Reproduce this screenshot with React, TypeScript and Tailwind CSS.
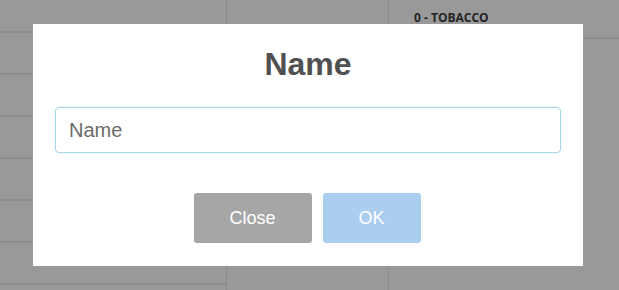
import React from "react";

export default function App() {
  const leftRows = [0, 1, 2, 3, 4, 5, 6];
  return (
    <div className="relative w-[619px] h-[290px] overflow-hidden bg-[#999999]" style={{ fontFamily: '"Liberation Sans", Arial, sans-serif' }}>
      <div className="flex h-full">
        <div className="w-[227px] h-full border-r border-[#8b8b8b] flex flex-col">
          <div className="h-[33px] shrink-0 border-b-2 border-[#8c8c8c]" />
          {leftRows.map((r) => (
            <div key={r} className="h-[42px] shrink-0 border-b-2 border-[#8c8c8c]" />
          ))}
        </div>
        <div className="w-[162px] h-full border-r border-[#8b8b8b]" />
        <div className="flex-1 h-full flex flex-col">
          <div className="h-[39px] shrink-0 border-b-2 border-[#8c8c8c] pl-[25px] pt-[5px]">
            <span className="text-[12px] font-bold text-[#242424] leading-[16px]" style={{ fontFamily: '"Open Sans", sans-serif' }}>
              0 - TOBACCO
            </span>
          </div>
        </div>
      </div>

      <div className="absolute left-[33px] top-[24px] w-[550px] h-[242px] bg-white px-[22px] pt-[24px] flex flex-col items-center">
        <h1 className="text-[32px] leading-[32px] font-bold text-[#505050]">Name</h1>
        <input
          placeholder="Name"
          className="mt-[27px] w-full h-[46px] rounded-[4px] border border-[#a8d6e8] px-[13px] text-[20px] text-[#555] placeholder:text-[#6b6b6b] outline-none shadow-[0_0_2px_rgba(102,175,233,0.25)]"
        />
        <div className="mt-[40px] flex gap-[11px] -translate-x-[1px]">
          <button className="w-[118px] h-[50px] rounded-[3px] bg-[#a6a6a6] text-white text-[18px]">Close</button>
          <button className="w-[98px] h-[50px] rounded-[3px] bg-[#abcdef] text-white text-[18px]">OK</button>
        </div>
      </div>
    </div>
  );
}
